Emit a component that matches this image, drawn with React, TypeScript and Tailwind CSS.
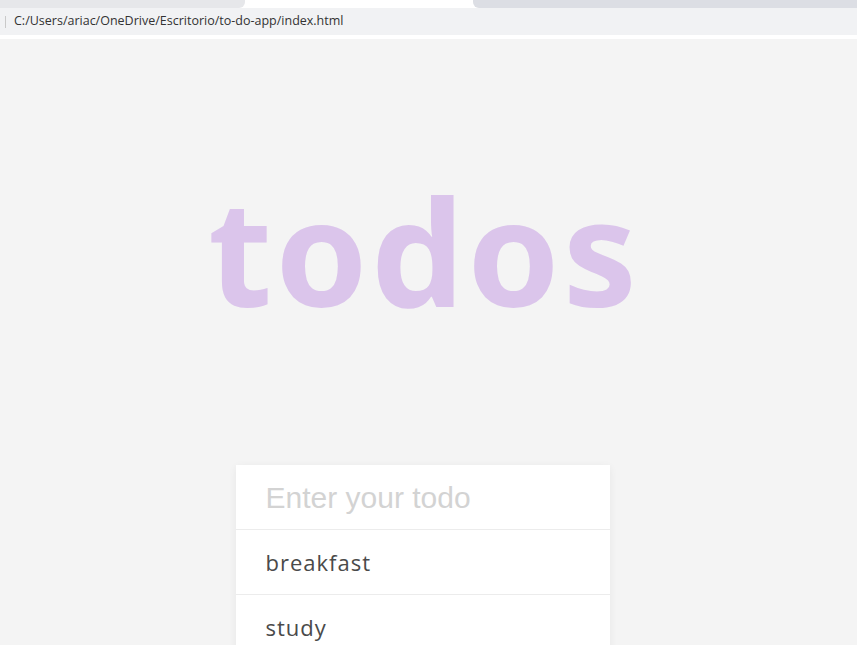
import React, { useState } from "react";

const App: React.FC = () => {
  const [todo, setTodo] = useState<string>("");
  const [todos] = useState<string[]>(["breakfast", "study"]);

  return (
    <div className="h-[645px] w-[857px] overflow-hidden flex flex-col bg-[#f4f4f4]">
      {/* browser tab strip */}
      <div className="h-[8px] shrink-0 flex bg-white">
        <div className="w-[245px] bg-[#e6e7ea] rounded-br-[6px]"></div>
        <div className="w-[228px] bg-white"></div>
        <div className="flex-1 bg-[#dcdee4] rounded-bl-[6px]"></div>
      </div>
      {/* address bar */}
      <div className="h-[27px] shrink-0 flex items-center bg-[#f1f2f4] pl-[5px]">
        <span className="w-px h-[12px] bg-[#c9c9c9]"></span>
        <span
          className="ml-[8px] text-[12.5px] text-[#333]"
          style={{ fontFamily: '"Open Sans", "Liberation Sans", sans-serif' }}
        >
          C:/Users/ariac/OneDrive/Escritorio/to-do-app/index.html
        </span>
      </div>
      <div className="h-[4px] shrink-0 bg-white"></div>

      <main className="flex-1 flex flex-col items-center pr-[12px]">
        <h1
          className="mt-[137px] pl-[3px] text-[148px] leading-[148px] font-bold tracking-[3px] text-[#dbc5eb]"
          style={{ fontFamily: "'Noto Sans', sans-serif" }}
        >
          todos
        </h1>

        <div className="mt-[141px] w-[374px] shrink-0 bg-white shadow-[0_2px_8px_rgba(0,0,0,0.06)]">
          <div className="h-[65px] flex items-center border-b border-[#ececec] px-[30px]">
            <input
              type="text"
              value={todo}
              onChange={(e) => setTodo(e.target.value)}
              placeholder="Enter your todo"
              className="w-full outline-none text-[30px] text-[#555] placeholder-[#d3d3d3]"
              style={{ fontFamily: '"Liberation Sans", Arial, sans-serif' }}
            />
          </div>
          {todos.map((item) => (
            <div
              key={item}
              className="h-[65px] flex items-center border-b border-[#ececec] px-[30px] text-[22px] tracking-[1px] text-[#4a4a4a]"
              style={{ fontFamily: '"Open Sans", "Noto Sans", sans-serif' }}
            >
              {item}
            </div>
          ))}
        </div>
      </main>
    </div>
  );
};

export default App;
